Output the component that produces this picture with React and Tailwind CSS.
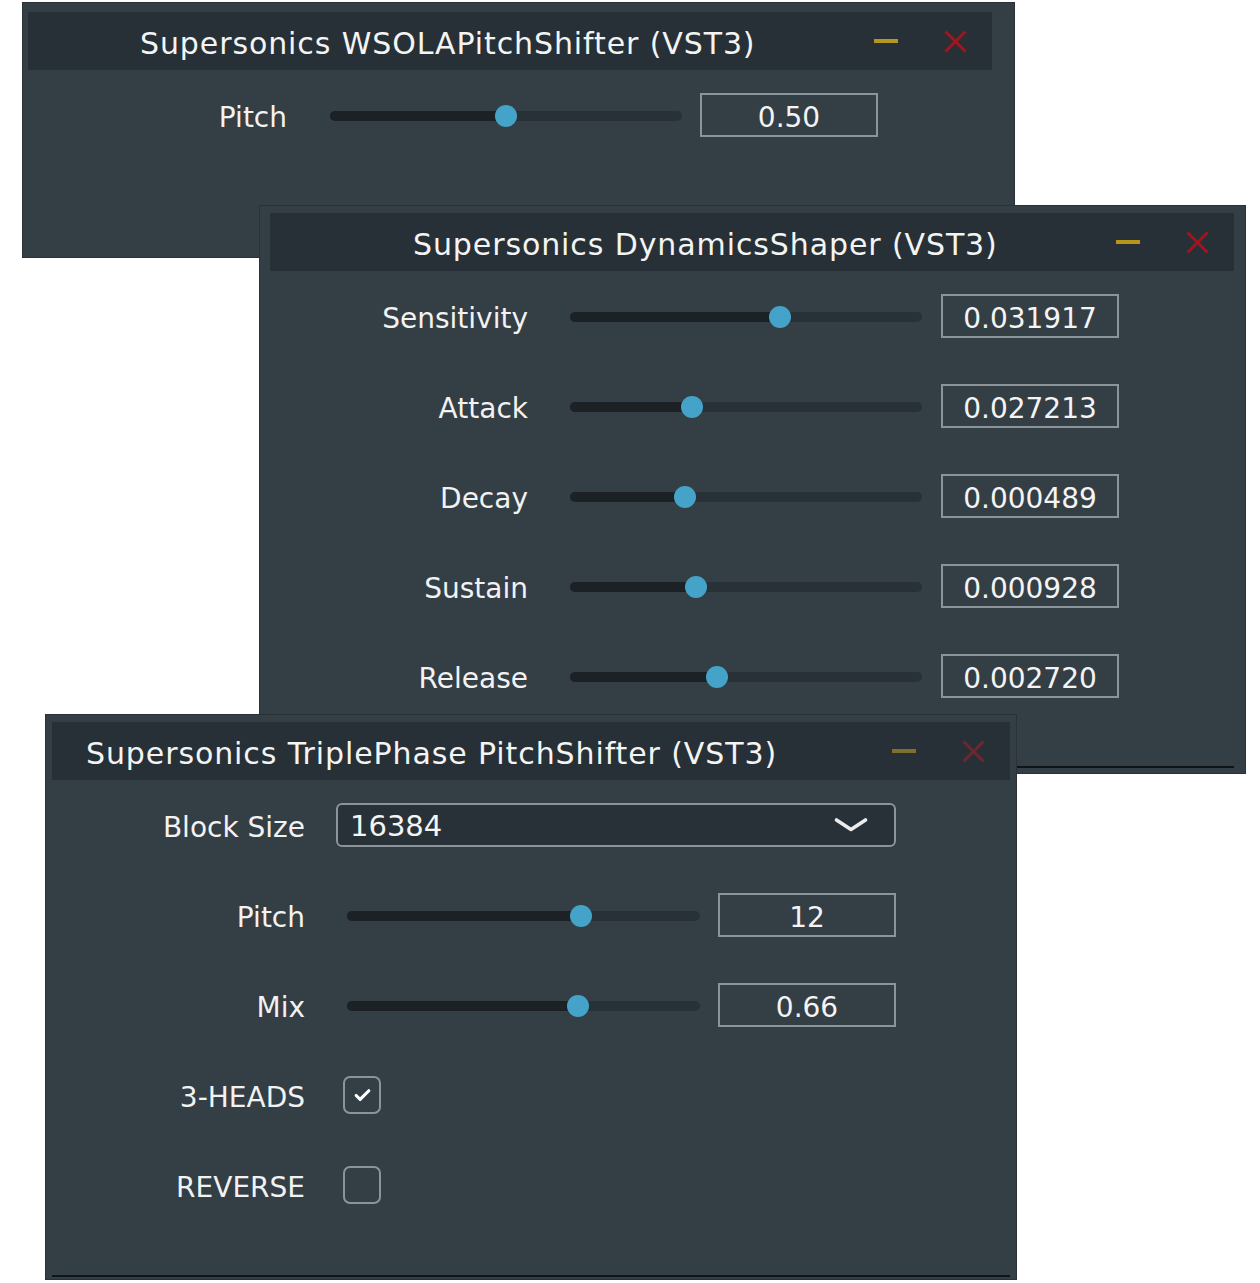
import { Check } from 'lucide-react';

const font = { fontFamily: '"DejaVu Sans", Verdana, sans-serif' };

const TitleButtons = ({ dim }) => (
  <div className="ml-auto flex items-center gap-[46px] pr-[25px]">
    <span className={`block h-[4px] w-[24px] ${dim ? 'bg-[#7f6f2a]' : 'bg-[#b8961e]'}`} />
    <svg width="23" height="23" viewBox="0 0 23 23">
      <path d="M1.5 1.5 L21.5 21.5 M21.5 1.5 L1.5 21.5" stroke={dim ? '#6e2630' : '#a0151f'} strokeWidth="3" />
    </svg>
  </div>
);

const Window = ({ className, title, titlePad, dim, line, children }) => (
  <div className={`absolute flex flex-col bg-[#343e45] border border-[#2a3137] ${className}`}>
    <div className="flex h-[58px] shrink-0 items-center bg-[#273036] text-[#f4f4f4]">
      <span className={`whitespace-nowrap pt-[4px] text-[30px] tracking-[0.9px] ${titlePad}`}>{title}</span>
      <TitleButtons dim={dim} />
    </div>
    <div className={`flex-1 bg-[#343e45] ${line ? 'border-b-2 border-[#101417]' : ''}`}>{children}</div>
  </div>
);

const Slider = ({ value, width = 'w-[352px]' }) => (
  <div className={`relative flex h-[22px] items-center ${width}`}>
    <div className="flex h-[10px] w-full overflow-hidden rounded-full bg-[#283137]">
      <div className="h-full bg-[#1b2125]" style={{ width: `${value * 100}%` }} />
    </div>
    <span
      className="absolute top-0 h-[22px] w-[22px] -translate-x-1/2 rounded-full bg-[#45a2c9]"
      style={{ left: `${value * 100}%` }}
    />
  </div>
);

const ValueBox = ({ children }) => (
  <div className="flex h-[44px] w-[178px] items-center justify-center border-2 border-[#8b9599] pt-[5px] text-[28px] text-[#f4f4f4]">
    {children}
  </div>
);

const SliderRow = ({ label, value, text, labelW, gapA, gapB, sw }) => (
  <div className="flex h-[44px] items-center">
    <span className={`pt-[5px] text-right text-[28px] text-[#f2f2f2] ${labelW}`}>{label}</span>
    <div className={`flex items-center pt-[1px] ${gapA}`}>
      <Slider value={value} width={sw} />
    </div>
    <div className={gapB}>
      <ValueBox>{text}</ValueBox>
    </div>
  </div>
);

const CheckRow = ({ label, checked }) => (
  <div className="flex h-[44px] items-center">
    <span className="w-[253px] pt-[5px] text-right text-[28px] text-[#f2f2f2]">{label}</span>
    <span className="ml-[38px] flex h-[38px] w-[38px] items-center justify-center rounded-[7px] border-2 border-[#8b9599]">
      {checked && <Check size={19} strokeWidth={4} className="text-white" />}
    </span>
  </div>
);

const dynamics = [
  ['Sensitivity', 0.597, '0.031917'],
  ['Attack', 0.347, '0.027213'],
  ['Decay', 0.327, '0.000489'],
  ['Sustain', 0.358, '0.000928'],
  ['Release', 0.418, '0.002720'],
];

export default function App() {
  return (
    <div className="relative h-[1283px] w-[1260px] overflow-hidden bg-white" style={font}>
      {/* WSOLA window */}
      <Window
        className="left-[22px] top-[2px] h-[256px] w-[993px] pl-[5px] pr-[22px] pt-[9px]"
        title="Supersonics WSOLAPitchShifter (VST3)"
        titlePad="pl-[112px]"
      >
        <div className="pt-[23px]">
          <SliderRow label="Pitch" value={0.5} text="0.50" labelW="w-[259px]" gapA="ml-[43px]" gapB="ml-[18px]" />
        </div>
      </Window>

      {/* DynamicsShaper window */}
      <Window
        className="left-[259px] top-[205px] h-[569px] w-[987px] pb-[5px] pl-[10px] pr-[11px] pt-[7px]"
        title="Supersonics DynamicsShaper (VST3)"
        titlePad="pl-[143px]"
        line
      >
        <div className="flex flex-col gap-[46px] pt-[23px]">
          {dynamics.map(([l, v, t]) => (
            <SliderRow key={l} label={l} value={v} text={t} labelW="w-[258px]" gapA="ml-[42px]" gapB="ml-[19px]" />
          ))}
        </div>
      </Window>

      {/* TriplePhase window */}
      <Window
        className="left-[45px] top-[714px] h-[566px] w-[972px] pb-[2px] pl-[6px] pr-[6px] pt-[7px]"
        title="Supersonics TriplePhase PitchShifter (VST3)"
        titlePad="pl-[34px]"
        dim
        line
      >
        <div className="flex flex-col gap-[46px] pt-[23px]">
          <div className="flex h-[44px] items-center">
            <span className="w-[253px] pt-[5px] text-right text-[28px] text-[#f2f2f2]">Block Size</span>
            <div className="ml-[31px] flex h-[44px] w-[560px] items-center rounded-[6px] border-2 border-[#8b9599] bg-[#283137] pl-[12px] pr-[26px]">
              <span className="pt-[4px] text-[29px] text-[#f4f4f4]">16384</span>
              <svg className="ml-auto" width="34" height="16" viewBox="0 0 34 16">
                <path d="M2.5 3 L17 12.5 L31.5 3" fill="none" stroke="#ececec" strokeWidth="3.6" strokeLinecap="round" strokeLinejoin="round" />
              </svg>
            </div>
          </div>
          <SliderRow label="Pitch" value={0.663} text="12" labelW="w-[253px]" gapA="ml-[42px]" gapB="ml-[18px]" sw="w-[353px]" />
          <SliderRow label="Mix" value={0.654} text="0.66" labelW="w-[253px]" gapA="ml-[42px]" gapB="ml-[18px]" sw="w-[353px]" />
          <CheckRow label="3-HEADS" checked />
          <CheckRow label="REVERSE" />
        </div>
      </Window>
    </div>
  );
}
